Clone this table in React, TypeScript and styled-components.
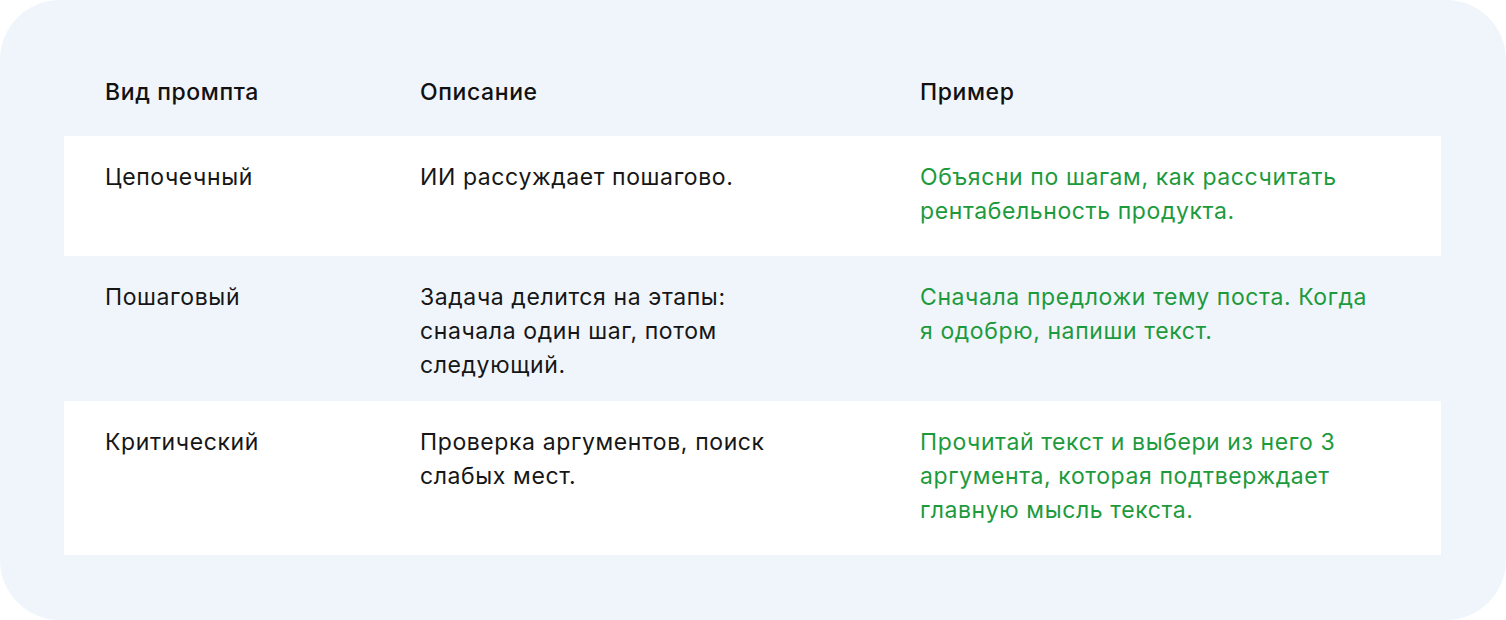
import React from "react"
import styled, { createGlobalStyle } from "styled-components"

const GlobalStyle = createGlobalStyle`
  html, body {
    margin: 0;
    padding: 0;
    background: #ffffff;
  }
  body {
    font-family: Inter, "Noto Sans", sans-serif;
  }
`

type Row = {
  kind: string
  description: string
  example: string
  tight?: boolean
}

const rows: Row[] = [
  {
    kind: "Цепочечный",
    description: "ИИ рассуждает пошагово.",
    example: "Объясни по шагам, как рассчитать рентабельность продукта.",
  },
  {
    kind: "Пошаговый",
    description: "Задача делится на этапы: сначала один шаг, потом следующий.",
    example: "Сначала предложи тему поста. Когда я одобрю, напиши текст.",
    tight: true,
  },
  {
    kind: "Критический",
    description: "Проверка аргументов, поиск слабых мест.",
    example: "Прочитай текст и выбери из него 3 аргумента, которая подтверждает главную мысль текста.",
  },
]

function App() {
  return (
    <>
      <GlobalStyle />
      <Card>
        <Table>
          <HeadRow>
            <HeadCell>Вид промпта</HeadCell>
            <HeadCell>Описание</HeadCell>
            <HeadCell>Пример</HeadCell>
          </HeadRow>
          {rows.map((r, i) => (
            <BodyRow key={r.kind} $striped={i % 2 === 0} $tight={r.tight}>
              <Cell>{r.kind}</Cell>
              <Cell $wrap={80}>{r.description}</Cell>
              <Cell $wrap={58} $green>{r.example}</Cell>
            </BodyRow>
          ))}
        </Table>
      </Card>
    </>
  )
}

export default App

const Card = styled.div`
  width: 1506px;
  height: 620px;
  box-sizing: border-box;
  background: #f0f5fc;
  border-radius: 60px;
  padding: 48px 65px 64px 64px;
`

const Table = styled.div`
  display: flex;
  flex-direction: column;
`

const grid = `
  display: grid;
  grid-template-columns: 315px 500px 1fr;
`

const HeadRow = styled.div`
  ${grid}
  padding: 27px 0;
`

const BodyRow = styled.div<{ $striped?: boolean; $tight?: boolean }>`
  ${grid}
  background: ${p => (p.$striped ? "#ffffff" : "transparent")};
  padding: 24px 0 ${p => (p.$tight ? "19px" : "28px")};
`

const HeadCell = styled.div`
  padding: 0 40px 0 41px;
  font-size: 23px;
  line-height: 34px;
  letter-spacing: 0.6px;
  font-weight: 500;
  color: #111111;
`

const Cell = styled.div<{ $green?: boolean; $wrap?: number }>`
  padding: 0 ${p => p.$wrap ?? 40}px 0 41px;
  font-size: 23px;
  line-height: 34px;
  letter-spacing: 0.6px;
  font-weight: 400;
  color: ${p => (p.$green ? "#1d9a3c" : "#161616")};
`
